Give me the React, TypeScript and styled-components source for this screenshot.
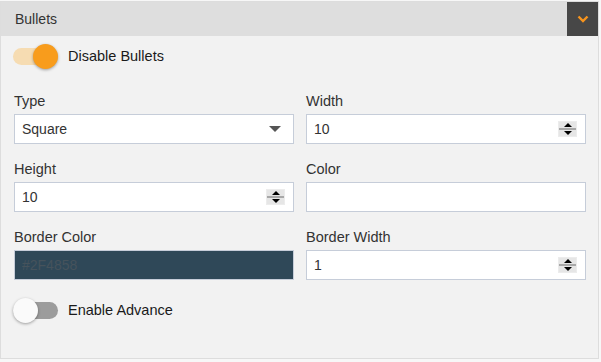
import styled, { createGlobalStyle } from "styled-components";

const GlobalStyle = createGlobalStyle`
  body {
    margin: 0;
    background: #f7f7f7;
    font-family: "Liberation Sans", Arial, sans-serif;
  }
`;

const Panel = styled.div`
  box-sizing: border-box;
  width: 599px;
  margin-top: 1px;
  border: 1px solid #dddddd;
  background: #f2f2f2;
`;

const Header = styled.div`
  display: flex;
  align-items: center;
  height: 34px;
  background: #dedede;
`;

const HeaderTitle = styled.div`
  flex: 1;
  padding-left: 14px;
  font-size: 14px;
  color: #333;
`;

const CollapseButton = styled.div`
  display: flex;
  align-items: center;
  justify-content: center;
  width: 31px;
  height: 34px;
  background: #474747;
`;

const Body = styled.div`
  display: flex;
  flex-direction: column;
  padding: 7px 12px 35px 12px;
`;

const SwitchRow = styled.label`
  display: flex;
  align-items: center;
  gap: 10px;
  height: 26px;
  font-size: 14.5px;
  color: #1a1a1a;
`;

const Switch = styled.span<{ $on: boolean }>`
  position: relative;
  display: inline-flex;
  align-items: center;
  justify-content: ${(p) => (p.$on ? "flex-end" : "flex-start")};
  width: 45px;
  height: 25px;
  &::before {
    content: "";
    position: absolute;
    left: 0;
    right: 0;
    top: 4px;
    height: 17px;
    border-radius: 9px;
    background: ${(p) => (p.$on ? "#f6dcb2" : "#9c9c9c")};
  }
`;

const Knob = styled.span<{ $on: boolean }>`
  position: relative;
  width: 25px;
  height: 25px;
  border-radius: 50%;
  background: ${(p) => (p.$on ? "#f89c1c" : "#fafafa")};
  box-shadow: 0 1px 3px rgba(0, 0, 0, 0.35);
`;

const Grid = styled.div`
  display: grid;
  grid-template-columns: 280px 280px;
  column-gap: 12px;
  row-gap: 17px;
  margin: 24px 1px 17px 1px;
`;

const Field = styled.div`
  display: flex;
  flex-direction: column;
`;

const Label = styled.div`
  font-size: 14.5px;
  line-height: 16px;
  color: #333;
  margin-bottom: 5px;
`;

const Box = styled.div<{ $bg?: string }>`
  box-sizing: border-box;
  display: flex;
  align-items: center;
  height: 30px;
  padding: 0 8px 0 7px;
  border: 1px solid #c6cdd9;
  background: ${(p) => p.$bg ?? "#fff"};
`;

const BoxInput = styled.input<{ $dim?: boolean }>`
  flex: 1;
  min-width: 0;
  border: 0;
  outline: 0;
  padding: 0;
  background: transparent;
  font-family: "Liberation Sans", Arial, sans-serif;
  font-size: 14px;
  color: #333;
  &::placeholder {
    color: ${(p) => (p.$dim ? "#46535c" : "#999")};
  }
`;

const SelectText = styled.div`
  flex: 1;
  font-size: 14px;
  color: #333;
`;

const Caret = styled.span`
  width: 0;
  height: 0;
  margin-right: 4px;
  border-left: 6px solid transparent;
  border-right: 6px solid transparent;
  border-top: 6px solid #555;
`;

const Spinner = styled.span`
  box-sizing: border-box;
  display: flex;
  flex-direction: column;
  width: 19px;
  height: 16px;
  background: #e6e6e6;
  border: 1px solid #ececec;
`;

const SpinHalf = styled.span<{ $down?: boolean }>`
  flex: 1;
  display: flex;
  align-items: center;
  justify-content: center;
  border-top: ${(p) => (p.$down ? "2px solid #a8a8a8" : "0")};
  &::after {
    content: "";
    width: 0;
    height: 0;
    border-left: 4px solid transparent;
    border-right: 4px solid transparent;
    ${(p) =>
      p.$down ? "border-top: 4px solid #000;" : "border-bottom: 4px solid #000;"}
  }
`;

function NumberBox({ value }: { value: string }) {
  return (
    <Box>
      <BoxInput defaultValue={value} />
      <Spinner>
        <SpinHalf />
        <SpinHalf $down />
      </Spinner>
    </Box>
  );
}

function Toggle({ on, label }: { on: boolean; label: string }) {
  return (
    <SwitchRow>
      <Switch $on={on}>
        <Knob $on={on} />
      </Switch>
      {label}
    </SwitchRow>
  );
}

export default function App() {
  return (
    <>
      <GlobalStyle />
      <Panel>
        <Header>
          <HeaderTitle>Bullets</HeaderTitle>
          <CollapseButton>
            <svg width="12" height="8" viewBox="0 0 12 8">
              <polyline
                points="1.5,1.5 6,6 10.5,1.5"
                fill="none"
                stroke="#f7941d"
                strokeWidth="2.4"
              />
            </svg>
          </CollapseButton>
        </Header>
        <Body>
          <Toggle on label="Disable Bullets" />
          <Grid>
            <Field>
              <Label>Type</Label>
              <Box>
                <SelectText>Square</SelectText>
                <Caret />
              </Box>
            </Field>
            <Field>
              <Label>Width</Label>
              <NumberBox value="10" />
            </Field>
            <Field>
              <Label>Height</Label>
              <NumberBox value="10" />
            </Field>
            <Field>
              <Label>Color</Label>
              <Box>
                <BoxInput />
              </Box>
            </Field>
            <Field>
              <Label>Border Color</Label>
              <Box $bg="#2f4858">
                <BoxInput $dim placeholder="#2F4858" />
              </Box>
            </Field>
            <Field>
              <Label>Border Width</Label>
              <NumberBox value="1" />
            </Field>
          </Grid>
          <Toggle on={false} label="Enable Advance" />
        </Body>
      </Panel>
    </>
  );
}
